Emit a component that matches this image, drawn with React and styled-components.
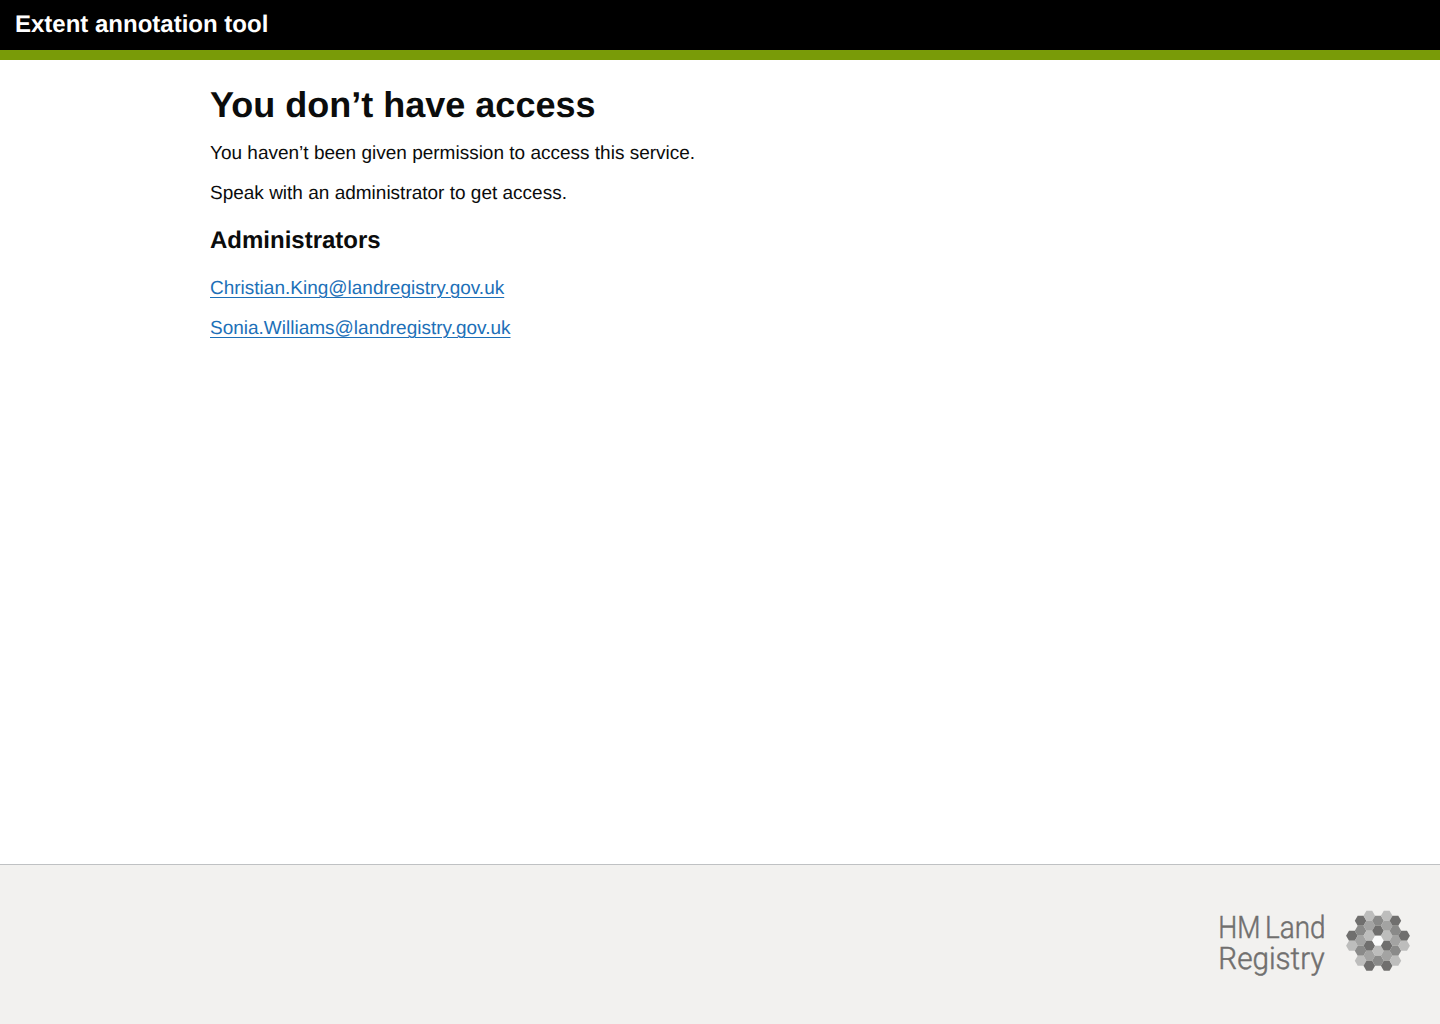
import React from "react";
import styled, { createGlobalStyle } from "styled-components";

const GlobalStyle = createGlobalStyle`
  body {
    margin: 0;
    background: #fff;
    color: #0b0c0c;
    font-family: "Liberation Sans", Arial, sans-serif;
    -webkit-font-smoothing: antialiased;
    text-rendering: geometricPrecision;
  }
`;

const Page = styled.div`
  display: flex;
  flex-direction: column;
  min-height: 100vh;
`;

const Header = styled.header`
  box-sizing: border-box;
  height: 60px;
  padding: 10px 15px 0;
  background: #000;
  border-bottom: 10px solid #799b08;
`;

const ServiceName = styled.div`
  color: #fff;
  font-size: 24px;
  font-weight: 700;
  line-height: 30px;
`;

const Main = styled.main`
  flex: 1;
  box-sizing: border-box;
  width: 1020px;
  margin: 0 auto;
  padding-top: 25px;
`;

const Title = styled.h1`
  margin: 0 0 16px;
  font-size: 36px;
  line-height: 40px;
`;

const Subtitle = styled.h2`
  margin: 0 0 20px;
  padding-top: 5px;
  font-size: 24px;
  line-height: 30px;
`;

const Paragraph = styled.p`
  margin: 0 0 15px;
  font-size: 19px;
  line-height: 25px;
`;

const Link = styled.a`
  color: #1d70b8;
  text-decoration: underline;
  text-decoration-thickness: 1px;
  text-underline-offset: 0.1578em;
`;

const Footer = styled.footer`
  box-sizing: border-box;
  height: 160px;
  padding: 35px 30px 0 0;
  display: flex;
  justify-content: flex-end;
  align-items: flex-start;
  background: #f2f1ef;
  border-top: 1px solid #bfc1c3;
`;

const Logo = styled.svg`
  display: block;
`;

const Wordmark = styled.text`
  fill: #706f6e;
  stroke: #706f6e;
  stroke-width: 0.5px;
  font-family: Roboto, "Open Sans", sans-serif;
  font-weight: 300;
  font-size: 31px;
`;

const tones = { d: "#706f6e", m: "#8a8a89", s: "#a3a3a2", l: "#bdbdbc", w: "#fbfbfb" };

const columns = [
  { x: -3, y: -0.5, cells: "dl" },
  { x: -2, y: -2, cells: "dmsml" },
  { x: -1, y: -2.5, cells: "lsldsd" },
  { x: 0, y: -2, cells: "mdwlm" },
  { x: 1, y: -2.5, cells: "lsldsd" },
  { x: 2, y: -2, cells: "dmsml" },
  { x: 3, y: -0.5, cells: "dl" },
];

const hexagon = (cx, cy) =>
  [[-5.8, 0], [-2.9, -5], [2.9, -5], [5.8, 0], [2.9, 5], [-2.9, 5]]
    .map(([dx, dy]) => `${cx + dx},${cy + dy}`)
    .join(" ");

function LandRegistryLogo() {
  return (
    <Logo width="196" height="90" viewBox="-4 -10 196 90" role="img" aria-label="HM Land Registry">
      <Wordmark x="0.3" y="28.2" textLength="42.2" lengthAdjust="spacingAndGlyphs">HM</Wordmark>
      <Wordmark x="47" y="28.2" textLength="60.5" lengthAdjust="spacingAndGlyphs">Land</Wordmark>
      <Wordmark x="0.3" y="59.3" textLength="106.2" lengthAdjust="spacingAndGlyphs">Registry</Wordmark>
      {columns.map((column) =>
        [...column.cells].map((tone, row) => (
          <polygon
            key={`${column.x}-${row}`}
            points={hexagon(160 + column.x * 8.7, 30.8 + (column.y + row) * 10)}
            fill={tones[tone]}
          />
        ))
      )}
    </Logo>
  );
}

const administrators = [
  "Christian.King@landregistry.gov.uk",
  "Sonia.Williams@landregistry.gov.uk",
];

export default function App() {
  return (
    <Page>
      <GlobalStyle />
      <Header>
        <ServiceName>Extent annotation tool</ServiceName>
      </Header>
      <Main>
        <Title>You don’t have access</Title>
        <Paragraph>You haven’t been given permission to access this service.</Paragraph>
        <Paragraph>Speak with an administrator to get access.</Paragraph>
        <Subtitle>Administrators</Subtitle>
        {administrators.map((email) => (
          <Paragraph key={email}>
            <Link href={`mailto:${email}`}>{email}</Link>
          </Paragraph>
        ))}
      </Main>
      <Footer>
        <LandRegistryLogo />
      </Footer>
    </Page>
  );
}
